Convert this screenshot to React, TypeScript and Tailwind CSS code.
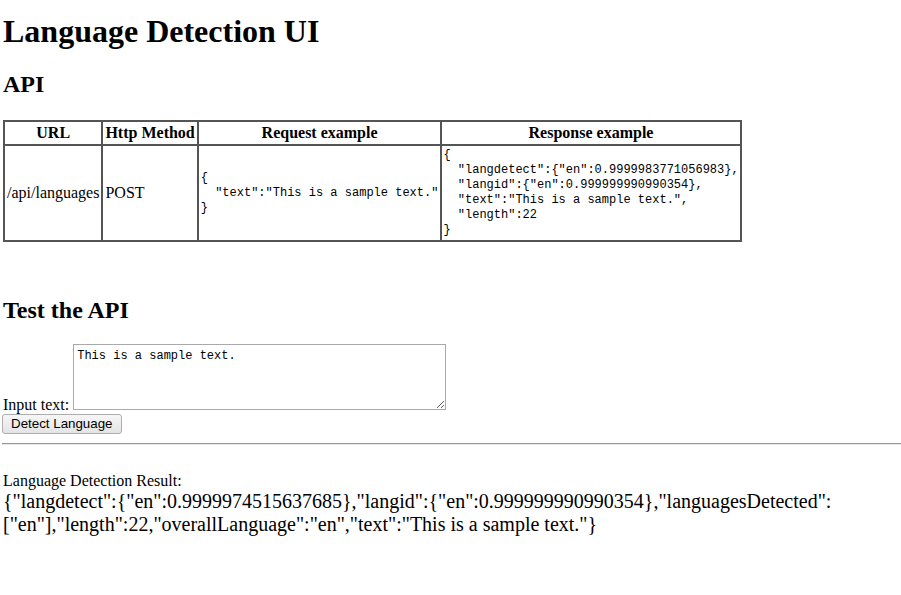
import React from "react";

const mono = "font-['Liberation_Mono',monospace] text-[12px] leading-[15px]";
const cell = "border-2 border-[#555] px-[2px]";

export default function App() {
  return (
    <div className="min-h-[595px] bg-white font-['Liberation_Serif',serif] text-[16px] leading-[18px] text-black">
      <div className="pl-[3px]">
        <h1 className="mt-[13px] text-[32px] font-bold leading-[36px]">Language Detection UI</h1>
        <h2 className="mt-[21px] text-[24px] font-bold leading-[28px]">API</h2>
        <table className="mt-[22px] border-collapse">
          <thead>
            <tr>
              <th className={`${cell} py-[2px] text-center font-bold`}>URL</th>
              <th className={`${cell} py-[2px] text-center font-bold`}>Http Method</th>
              <th className={`${cell} py-[2px] text-center font-bold`}>Request example</th>
              <th className={`${cell} py-[2px] text-center font-bold`}>Response example</th>
            </tr>
          </thead>
          <tbody>
            <tr>
              <td className={`${cell} py-[2px] align-middle`}>/api/languages</td>
              <td className={`${cell} py-[2px] align-middle`}>POST</td>
              <td className={`${cell} py-[2px] align-middle`}>
                <pre className={`${mono} m-0`}>{`{
  "text":"This is a sample text."
}`}</pre>
              </td>
              <td className="border-2 border-[#555] px-[1px] py-[2px] align-middle">
                <pre className={`${mono} m-0`}>{`{
  "langdetect":{"en":0.9999983771056983},
  "langid":{"en":0.999999990990354},
  "text":"This is a sample text.",
  "length":22
}`}</pre>
              </td>
            </tr>
          </tbody>
        </table>
        <h2 className="mt-[54px] text-[24px] font-bold leading-[28px]">Test the API</h2>
        <div className="mt-[20px]">
          Input text:{" "}
          <textarea
            className={`${mono} inline-block h-[66px] w-[373px] resize border border-[#a9a9a9] px-[3px] py-[4px] align-baseline outline-none`}
            defaultValue="This is a sample text."
          />
        </div>
      </div>
      <div className="pl-[2px]">
        <button className="h-[20px] rounded-[3px] border border-[#adadad] bg-gradient-to-b from-[#f6f6f6] to-[#e4e4e4] px-[8px] font-['Liberation_Sans',sans-serif] text-[13.33px] leading-[16px] text-black">
          Detect Language
        </button>
      </div>
      <hr className="ml-[2px] mt-[9px] border-t border-b border-t-[#9a9a9a] border-b-[#e6e6e6]" />
      <div className="pl-[3px]">
        <div className="mt-[27px] leading-[18px]">Language Detection Result:</div>
        <div className="text-[20px] leading-[23px]">
          {`{"langdetect":{"en":0.9999974515637685},"langid":{"en":0.999999990990354},"languagesDetected":["en"],"length":22,"overallLanguage":"en","text":"This is a sample text."}`}
        </div>
      </div>
    </div>
  );
}
